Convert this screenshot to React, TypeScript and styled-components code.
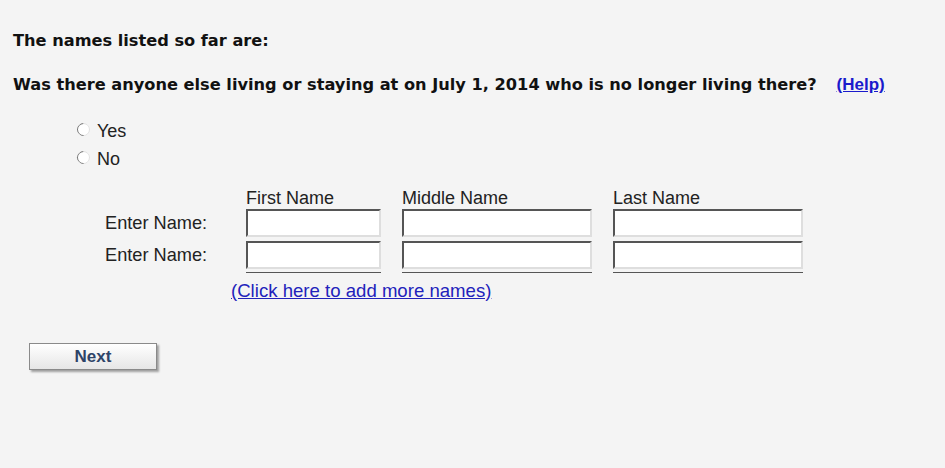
import React from "react";
import styled, { createGlobalStyle } from "styled-components";

const GlobalStyle = createGlobalStyle`
  html, body {
    margin: 0;
    padding: 0;
    background: #f4f4f4;
  }
  body {
    font-family: "Liberation Sans", Arial, sans-serif;
    color: #222;
  }
`;

const Page = styled.div`
  width: 945px;
  height: 468px;
  box-sizing: border-box;
  padding: 31px 0 0 13px;
  background: #f4f4f4;
  overflow: hidden;
`;

const Heading = styled.div<{ $gap?: number }>`
  font-family: "DejaVu Sans", Verdana, sans-serif;
  font-weight: bold;
  font-size: 16.2px;
  line-height: 20px;
  color: #111;
  margin-bottom: ${(p) => p.$gap ?? 0}px;
  white-space: nowrap;
`;

const HelpLink = styled.a`
  font-family: "Liberation Sans", Arial, sans-serif;
  font-weight: bold;
  font-size: 17px;
  color: #1a1acc;
  text-decoration: underline;
  margin-left: 20px;
`;

const RadioGroup = styled.div`
  display: flex;
  flex-direction: column;
  gap: 8px;
  padding-left: 64px;
  margin-top: 1px;
`;

const RadioRow = styled.label`
  display: flex;
  align-items: center;
  gap: 7px;
  font-size: 18px;
  line-height: 20px;
  color: #222;
`;

const RadioDot = styled.span`
  width: 11px;
  height: 11px;
  border-radius: 50%;
  background: #fff;
  border: 1px solid;
  border-color: #7a7a7a #e2e2e2 #e2e2e2 #7a7a7a;
  transform: rotate(-45deg);
  box-sizing: content-box;
  margin-top: -3px;
`;

const NameGrid = styled.div`
  display: grid;
  grid-template-columns: 120px 135px 190px 190px;
  column-gap: 21px;
  row-gap: 4px;
  margin: 20px 0 0 92px;
  align-items: center;
`;

const ColHead = styled.div`
  font-size: 18px;
  line-height: 18px;
  color: #222;
  margin-bottom: -2px;
`;

const RowLabel = styled.div`
  font-size: 18.2px;
  line-height: 20px;
  color: #222;
`;

const NameInput = styled.input`
  box-sizing: border-box;
  width: 100%;
  height: 28px;
  margin: 0;
  background: #fff;
  border-style: solid;
  border-width: 2px;
  border-color: #555 #dedede #dedede #555;
  outline: none;
`;

const Rule = styled.div`
  height: 1px;
  margin-top: -2px;
  background: #555;
`;

const AddLink = styled.a`
  display: block;
  margin: 8px 0 0 218px;
  font-size: 18.6px;
  line-height: 20px;
  color: #2222bb;
  text-decoration: underline;
`;

const NextButton = styled.button`
  display: block;
  margin: 42px 0 0 16px;
  width: 128px;
  height: 27px;
  border: 1px solid #8a8a8a;
  background: linear-gradient(#ffffff, #e6e6e6);
  box-shadow: 2px 2px 2px rgba(0, 0, 0, 0.35);
  font-family: "Liberation Sans", Arial, sans-serif;
  font-weight: bold;
  font-size: 17px;
  color: #2e4468;
  padding: 0;
`;

const columns = ["First Name", "Middle Name", "Last Name"];

export default function App() {
  return (
    <>
      <GlobalStyle />
      <Page>
        <Heading $gap={24}>The names listed so far are:</Heading>
        <Heading $gap={26}>
          Was there anyone else living or staying at on July 1, 2014 who is no
          longer living there?
          <HelpLink href="#">(Help)</HelpLink>
        </Heading>
        <RadioGroup>
          <RadioRow>
            <RadioDot />
            Yes
          </RadioRow>
          <RadioRow>
            <RadioDot />
            No
          </RadioRow>
        </RadioGroup>
        <NameGrid>
          <div />
          {columns.map((c) => (
            <ColHead key={c}>{c}</ColHead>
          ))}
          {[0, 1].map((r) => (
            <React.Fragment key={r}>
              <RowLabel>Enter Name:</RowLabel>
              {columns.map((c) => (
                <NameInput key={c} type="text" />
              ))}
            </React.Fragment>
          ))}
          <div />
          {columns.map((c) => (
            <Rule key={c} />
          ))}
        </NameGrid>
        <AddLink href="#">(Click here to add more names)</AddLink>
        <NextButton>Next</NextButton>
      </Page>
    </>
  );
}
